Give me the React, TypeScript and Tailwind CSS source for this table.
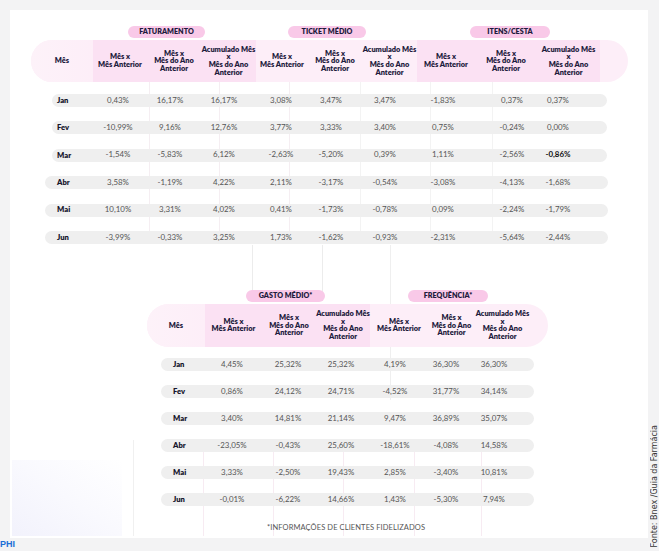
const font = "font-['Lato','Noto_Sans',sans-serif]";

type Row = { m: string; v: string[]; bold?: number };

const topRows: Row[] = [
  { m: "Jan", v: ["0,43%", "16,17%", "16,17%", "3,08%", "3,47%", "3,47%", "-1,83%", "0,37%", "0,37%"] },
  { m: "Fev", v: ["-10,99%", "9,16%", "12,76%", "3,77%", "3,33%", "3,40%", "0,75%", "-0,24%", "0,00%"] },
  { m: "Mar", v: ["-1,54%", "-5,83%", "6,12%", "-2,63%", "-5,20%", "0,39%", "1,11%", "-2,56%", "-0,86%"], bold: 8 },
  { m: "Abr", v: ["3,58%", "-1,19%", "4,22%", "2,11%", "-3,17%", "-0,54%", "-3,08%", "-4,13%", "-1,68%"] },
  { m: "Mai", v: ["10,10%", "3,31%", "4,02%", "0,41%", "-1,73%", "-0,78%", "0,09%", "-2,24%", "-1,79%"] },
  { m: "Jun", v: ["-3,99%", "-0,33%", "3,25%", "1,73%", "-1,62%", "-0,93%", "-2,31%", "-5,64%", "-2,44%"] },
];

const bottomRows: Row[] = [
  { m: "Jan", v: ["4,45%", "25,32%", "25,32%", "4,19%", "36,30%", "36,30%"] },
  { m: "Fev", v: ["0,86%", "24,12%", "24,71%", "-4,52%", "31,77%", "34,14%"] },
  { m: "Mar", v: ["3,40%", "14,81%", "21,14%", "9,47%", "36,89%", "35,07%"] },
  { m: "Abr", v: ["-23,05%", "-0,43%", "25,60%", "-18,61%", "-4,08%", "14,58%"] },
  { m: "Mai", v: ["3,33%", "-2,50%", "19,43%", "2,85%", "-3,40%", "10,81%"] },
  { m: "Jun", v: ["-0,01%", "-6,22%", "14,66%", "1,43%", "-5,30%", "7,94%"] },
];

// gaps between the 46px value cells
const topGaps = ["", "ml-[6px]", "ml-[8px]", "ml-[11px]", "ml-[4px]", "ml-[8px]", "ml-[12px]", "ml-[23px]", ""];
const bottomGaps = ["", "ml-[10px]", "ml-[7px]", "ml-[8px]", "ml-[5px]", "ml-[2px]"];

function Pill({ label, className }: { label: string; className: string }) {
  return (
    <div
      className={`flex h-[12px] items-center justify-center rounded-full bg-[#f9c9e8] text-[7.2px] font-extrabold leading-none text-[#1d1b3d] ${className}`}
    >
      {label}
    </div>
  );
}

function HeadCell({ lines, className = "" }: { lines: string[]; className?: string }) {
  return (
    <div className={`flex h-full flex-col items-center justify-center text-center text-[7.4px] font-extrabold leading-[7.6px] text-[#1d1b3d] ${className}`}>
      {lines.map((l, i) => (
        <span key={i} className="whitespace-nowrap">
          {l}
        </span>
      ))}
    </div>
  );
}

const colA = ["Mês x", "Mês Anterior"];
const colB = ["Mês x", "Mês do Ano", "Anterior"];
const colC = ["Acumulado Mês", "x", "Mês do Ano", "Anterior"];

function DataRow({ row, gaps, className, monthCls }: { row: Row; gaps: string[]; className: string; monthCls: string }) {
  return (
    <div className={`relative flex h-[13px] items-center rounded-full bg-[#efefef] ${className}`}>
      <div className={`shrink-0 text-[7.6px] font-extrabold text-[#16162c] ${monthCls}`}>{row.m}</div>
      {row.v.map((v, i) => (
        <div
          key={i}
          className={`w-[46px] shrink-0 text-center text-[7.9px] ${gaps[i]} ${
            row.bold === i ? "font-bold text-[#111]" : "text-[#555]"
          }`}
        >
          {v}
        </div>
      ))}
    </div>
  );
}

function Line({ className }: { className: string }) {
  return <div className={`absolute w-px ${className}`} />;
}

export default function App() {
  return (
    <div className={`relative h-[551px] w-[659px] overflow-hidden bg-[#f3f3f4] ${font}`}>
      <div className="absolute left-[10px] top-[10px] h-[528px] w-[638px] bg-white" />

      {/* faint decorative guide lines */}
      <Line className="left-[149px] top-[82px] h-[160px] bg-[#f5eef2]" />
      <Line className="left-[219px] top-[82px] h-[160px] bg-[#f5eef2]" />
      <Line className="left-[289px] top-[82px] h-[160px] bg-[#f5eef2]" />
      <Line className="left-[360px] top-[82px] h-[160px] bg-[#f3f3f3]" />
      <Line className="left-[430px] top-[82px] h-[160px] bg-[#f3f3f3]" />
      <Line className="left-[492px] top-[82px] h-[160px] bg-[#f3f3f3]" />
      <Line className="left-[252px] top-[245px] h-[48px] bg-[#ececec]" />
      <Line className="left-[322px] top-[245px] h-[48px] bg-[#ececec]" />
      <Line className="left-[390px] top-[245px] h-[155px] bg-[#efefef]" />
      <Line className="left-[133px] top-[440px] h-[96px] bg-[#f0f0f0]" />
      <Line className="left-[203px] top-[440px] h-[96px] bg-[#f7ebf2]" />
      <Line className="left-[273px] top-[440px] h-[96px] bg-[#f7ebf2]" />
      <Line className="left-[343px] top-[440px] h-[96px] bg-[#f7ebf2]" />
      <Line className="left-[414px] top-[440px] h-[96px] bg-[#f7ebf2]" />
      <Line className="left-[481px] top-[440px] h-[96px] bg-[#f7ebf2]" />
      <div className="absolute left-[12px] top-[460px] h-[76px] w-[110px] bg-gradient-to-tr from-[#f2f2fc] via-[#f9f9fe] to-white" />

      <div className="relative pl-[10px] pt-[26px]">
        {/* top table */}
        <div className="flex pl-[118px]">
          <Pill label="FATURAMENTO" className="w-[77px]" />
          <Pill label="TICKET MÉDIO" className="ml-[83px] w-[78px]" />
          <Pill label="ITENS/CESTA" className="ml-[104px] w-[80px]" />
        </div>
        <div className="ml-[21px] mt-[2px] flex h-[42px] w-[597px] overflow-hidden rounded-full bg-[#fdeef8]">
          <HeadCell lines={["Mês"]} className="w-[62px] bg-gradient-to-r from-[#fdf2f9] to-[#fdeef8]" />
          <div className="flex h-full bg-[#fbe1f3]">
            <HeadCell lines={colA} className="w-[54px]" />
            <HeadCell lines={colB} className="w-[54px]" />
            <HeadCell lines={colC} className="w-[55px]" />
          </div>
          <div className="flex h-full">
            <HeadCell lines={colA} className="w-[52px]" />
            <HeadCell lines={colB} className="w-[54px]" />
            <HeadCell lines={colC} className="w-[55px]" />
          </div>
          <div className="flex h-full bg-[#fbe1f3]">
            <HeadCell lines={colA} className="w-[58px]" />
            <HeadCell lines={colB} className="w-[62px]" />
            <HeadCell lines={colC} className="w-[63px]" />
          </div>
        </div>
        <div className="mt-[12px] flex flex-col gap-[14.4px]">
          {topRows.map((r, i) =>
            i < 3 ? (
              <DataRow key={r.m} row={r} gaps={topGaps} className="ml-[42px] w-[555px]" monthCls="w-[43px] pl-[5px]" />
            ) : (
              <DataRow key={r.m} row={r} gaps={topGaps} className="ml-[35px] w-[563px]" monthCls="w-[50px] pl-[12px]" />
            )
          )}
        </div>

        {/* bottom table */}
        <div className="mt-[46px] flex pl-[236px]">
          <Pill label="GASTO MÉDIO*" className="w-[79px]" />
          <Pill label="FREQUÊNCIA*" className="ml-[83px] w-[80px]" />
        </div>
        <div className="ml-[137px] mt-[2px] flex h-[43px] w-[401px] overflow-hidden rounded-full bg-[#fdeef8]">
          <HeadCell lines={["Mês"]} className="w-[58px] bg-gradient-to-r from-[#fdf2f9] to-[#fdeef8]" />
          <div className="flex h-full bg-[#fbe1f3]">
            <HeadCell lines={colA} className="w-[57px]" />
            <HeadCell lines={colB} className="w-[54px]" />
            <HeadCell lines={colC} className="w-[54px]" />
          </div>
          <div className="flex h-full">
            <HeadCell lines={colA} className="w-[58px]" />
            <HeadCell lines={colB} className="w-[47px]" />
            <HeadCell lines={colC} className="w-[55px]" />
          </div>
        </div>
        <div className="mt-[11px] flex flex-col gap-[14px]">
          {bottomRows.map((r) => (
            <DataRow key={r.m} row={r} gaps={bottomGaps} className="ml-[151px] w-[373px]" monthCls="w-[48px] pl-[12px]" />
          ))}
        </div>
        <p className="ml-[257px] mt-[18px] text-[7.5px] leading-none tracking-[0.1px] text-[#555]">
          *INFORMAÇÕES DE CLIENTES FIDELIZADOS
        </p>
      </div>

      <div className="absolute bottom-[2px] left-0 font-['Liberation_Sans',sans-serif] text-[9px] font-bold leading-none text-[#1d6fd6]">
        PHI
      </div>
      <div className="absolute bottom-[4px] right-[0px] rotate-180 font-['DejaVu_Sans',sans-serif] text-[8px] leading-none text-[#333] [writing-mode:vertical-rl]">
        Fonte: Bnex /Guia da Farmácia
      </div>
    </div>
  );
}
